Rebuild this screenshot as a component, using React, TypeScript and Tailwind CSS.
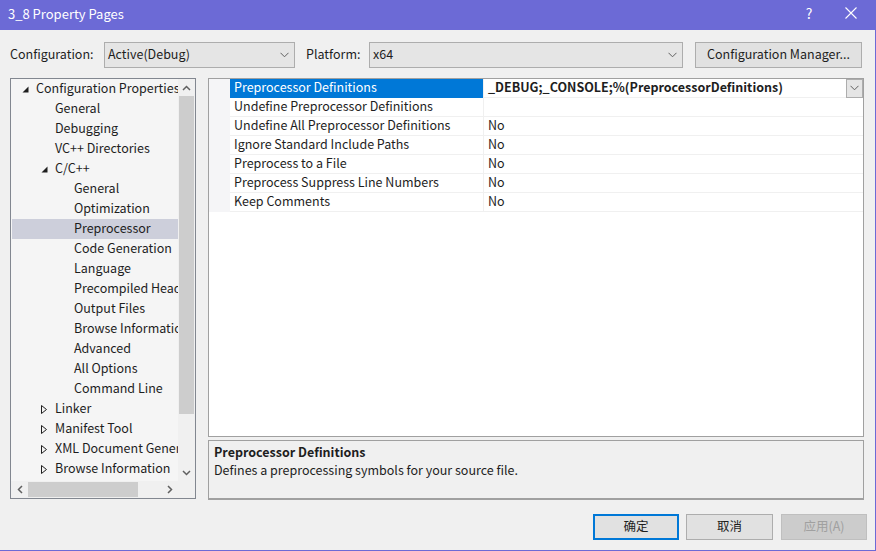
import React from "react";

const Chevron = ({ className = "" }: { className?: string }) => (
  <svg width="9" height="6" viewBox="0 0 9 6" className={className}>
    <path d="M0.5 0.8 L4.5 4.8 L8.5 0.8" fill="none" stroke="#606060" strokeWidth="1" />
  </svg>
);

const ExpandedTri = () => (
  <svg width="7" height="7" viewBox="0 0 7 7">
    <polygon points="6.5,0.5 6.5,6.5 0.5,6.5" fill="#1e1e1e" />
  </svg>
);

const CollapsedTri = () => (
  <svg width="6" height="9" viewBox="0 0 6 9">
    <polygon points="0.5,0.5 5.5,4.5 0.5,8.5" fill="none" stroke="#1e1e1e" strokeWidth="1" />
  </svg>
);

type TreeRow = { text: string; level: number; tri?: "open" | "closed"; selected?: boolean };

const treeRows: TreeRow[] = [
  { text: "Configuration Properties", level: 0, tri: "open" },
  { text: "General", level: 1 },
  { text: "Debugging", level: 1 },
  { text: "VC++ Directories", level: 1 },
  { text: "C/C++", level: 1, tri: "open" },
  { text: "General", level: 2 },
  { text: "Optimization", level: 2 },
  { text: "Preprocessor", level: 2, selected: true },
  { text: "Code Generation", level: 2 },
  { text: "Language", level: 2 },
  { text: "Precompiled Headers", level: 2 },
  { text: "Output Files", level: 2 },
  { text: "Browse Information", level: 2 },
  { text: "Advanced", level: 2 },
  { text: "All Options", level: 2 },
  { text: "Command Line", level: 2 },
  { text: "Linker", level: 1, tri: "closed" },
  { text: "Manifest Tool", level: 1, tri: "closed" },
  { text: "XML Document Generator", level: 1, tri: "closed" },
  { text: "Browse Information", level: 1, tri: "closed" },
];

const props: { name: string; value: string }[] = [
  { name: "Preprocessor Definitions", value: "_DEBUG;_CONSOLE;%(PreprocessorDefinitions)" },
  { name: "Undefine Preprocessor Definitions", value: "" },
  { name: "Undefine All Preprocessor Definitions", value: "No" },
  { name: "Ignore Standard Include Paths", value: "No" },
  { name: "Preprocess to a File", value: "No" },
  { name: "Preprocess Suppress Line Numbers", value: "No" },
  { name: "Keep Comments", value: "No" },
];

const levelPad: Record<number, string> = { 0: "pl-[10px]", 1: "pl-[29px]", 2: "pl-[48px]" };

export default function App() {
  return (
    <div className="w-[876px] h-[551px] bg-[#f0f0f0] flex flex-col border-r border-b border-[#6c6ad6] overflow-hidden font-['Noto_Sans_CJK_SC','Noto_Sans',sans-serif] text-[12.5px] text-[#1e1e1e] leading-none">
      {/* Title bar */}
      <div className="h-[30px] shrink-0 bg-[#6c6ad6] flex items-center pl-[8px] pb-[4px] text-white">
        <span className="text-[13px]">3_8 Property Pages</span>
        <div className="flex-1" />
        <span className="w-[14px] text-center text-[14px] mr-[29px]">?</span>
        <svg width="12" height="12" viewBox="0 0 12 12" className="mr-[18px]">
          <path d="M0.5 0.5 L11.5 11.5 M11.5 0.5 L0.5 11.5" stroke="white" strokeWidth="1.1" />
        </svg>
      </div>

      {/* Config row */}
      <div className="mt-[12px] h-[26px] shrink-0 flex items-center pl-[10px]">
        <span className="w-[94px] pb-[2px]">Configuration:</span>
        <div className="w-[191px] h-[26px] border border-[#adadad] bg-[#e5e5e5] flex items-center justify-between pl-[3px] pr-[5px]">
          <span className="pb-[2px]">Active(Debug)</span>
          <Chevron />
        </div>
        <span className="ml-[11px] w-[63px] pb-[2px]">Platform:</span>
        <div className="w-[314px] h-[26px] border border-[#adadad] bg-[#e5e5e5] flex items-center justify-between pl-[3px] pr-[5px]">
          <span className="pb-[2px]">x64</span>
          <Chevron />
        </div>
        <div className="ml-[12px] w-[167px] h-[26px] border border-[#adadad] bg-[#e1e1e1] flex items-center justify-center pb-[2px]">
          Configuration Manager...
        </div>
      </div>

      {/* Main area */}
      <div className="mt-[10px] flex pl-[10px]">
        {/* Tree panel */}
        <div className="w-[186px] h-[421px] border border-[#828790] bg-[#f5f5f5] flex flex-col">
          <div className="flex flex-1 min-h-0">
            <div className="flex-1 min-w-0 overflow-hidden pl-[1px]">
              {treeRows.map((r, i) => (
                <div
                  key={i}
                  className={`h-[20px] flex items-center whitespace-nowrap pb-[2px] ${levelPad[r.level]} ${r.selected ? "bg-[#cdcfdb]" : ""}`}
                >
                  <span className="w-[14px] shrink-0 flex items-center pt-[2px]">
                    {r.tri === "open" ? <ExpandedTri /> : r.tri === "closed" ? <CollapsedTri /> : null}
                  </span>
                  <span className="shrink-0">{r.text}</span>
                </div>
              ))}
            </div>
            {/* vertical scrollbar */}
            <div className="w-[17px] bg-[#f0f0f0] flex flex-col">
              <div className="h-[17px] flex items-center justify-center">
                <svg width="9" height="6" viewBox="0 0 9 6">
                  <path d="M1 5 L4.5 1.5 L8 5" fill="none" stroke="#606060" strokeWidth="1.5" />
                </svg>
              </div>
              <div className="mx-[1px] h-[318px] bg-[#cdcdcd]" />
              <div className="flex-1" />
              <div className="h-[17px] flex items-center justify-center">
                <svg width="9" height="6" viewBox="0 0 9 6">
                  <path d="M1 1 L4.5 4.5 L8 1" fill="none" stroke="#606060" strokeWidth="1.5" />
                </svg>
              </div>
            </div>
          </div>
          {/* horizontal scrollbar */}
          <div className="h-[17px] flex bg-[#f0f0f0]">
            <div className="w-[17px] flex items-center justify-center">
              <svg width="6" height="9" viewBox="0 0 6 9">
                <path d="M5 1 L1.5 4.5 L5 8" fill="none" stroke="#606060" strokeWidth="1.5" />
              </svg>
            </div>
            <div className="w-[110px] my-[1px] bg-[#cdcdcd]" />
            <div className="flex-1" />
            <div className="w-[17px] flex items-center justify-center">
              <svg width="6" height="9" viewBox="0 0 6 9">
                <path d="M1 1 L4.5 4.5 L1 8" fill="none" stroke="#606060" strokeWidth="1.5" />
              </svg>
            </div>
            <div className="w-[17px]" />
          </div>
        </div>

        {/* Right column */}
        <div className="ml-[12px] w-[656px] flex flex-col">
          <div className="h-[359px] border border-[#a0a0a0] bg-white">
            {props.map((p, i) => (
              <div key={i} className="h-[19px] flex">
                <div className="w-[21px] bg-[#f5f5f7]" />
                <div
                  className={`w-[253px] flex items-center pl-[4px] pb-[2px] whitespace-nowrap border-b border-[#f0f0f0] ${
                    i === 0 ? "bg-[#0078d7] text-white border-b-[#0078d7]" : ""
                  }`}
                >
                  {p.name}
                </div>
                <div className="flex-1 flex items-center border-b border-l border-[#f0f0f0] pl-[4px] whitespace-nowrap">
                  {i === 0 ? (
                    <>
                      <span className="font-bold flex-1 pb-[2px]">{p.value}</span>
                      <div className="w-[17px] h-[19px] border border-[#adadad] bg-[#e5e5e5] flex items-center justify-center">
                        <Chevron />
                      </div>
                    </>
                  ) : (
                    <span className="pb-[2px]">{p.value}</span>
                  )}
                </div>
              </div>
            ))}
          </div>
          <div className="mt-[3px] h-[60px] border border-[#a0a0a0] border-b-2 bg-[#f0f0f0] pl-[5px] pt-[5px]">
            <div className="font-bold h-[18px] leading-[12px]">Preprocessor Definitions</div>
            <div className="leading-[12px]">Defines a preprocessing symbols for your source file.</div>
          </div>
        </div>
      </div>

      {/* Buttons */}
      <div className="mt-[14px] flex justify-end pr-[8px]">
        <div className="w-[86px] h-[26px] border-2 border-[#0078d7] bg-[#e1e1e1] flex items-center justify-center pb-[1px]">确定</div>
        <div className="ml-[7px] w-[87px] h-[26px] border border-[#adadad] bg-[#e1e1e1] flex items-center justify-center pb-[1px]">取消</div>
        <div className="ml-[8px] w-[86px] h-[26px] border border-[#bfbfbf] bg-[#cccccc] text-[#a0a0a0] flex items-center justify-center pb-[1px]">应用(A)</div>
      </div>
    </div>
  );
}
